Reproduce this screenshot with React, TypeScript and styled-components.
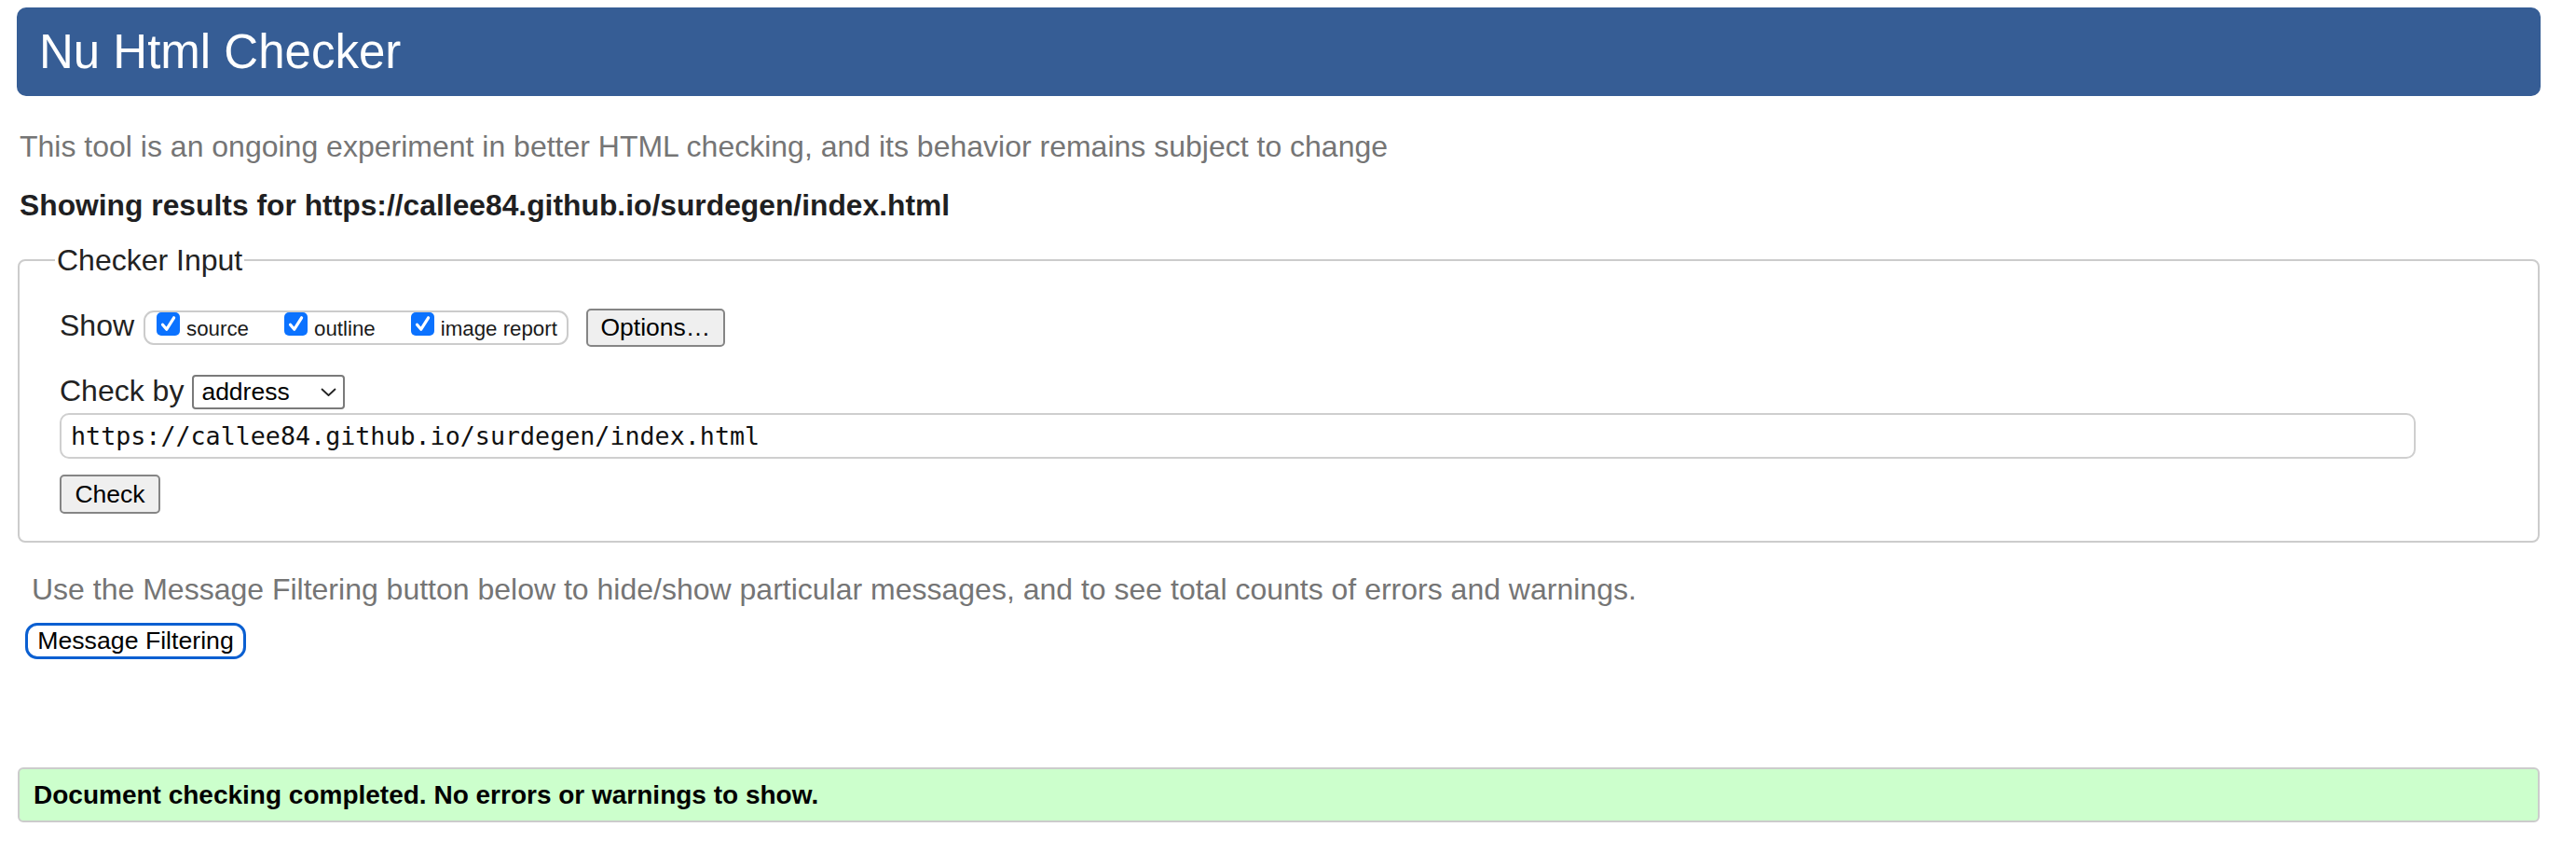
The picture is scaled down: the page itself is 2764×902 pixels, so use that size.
import React from 'react';
import styled, { createGlobalStyle } from 'styled-components';

const GlobalStyle = createGlobalStyle`
  html, body {
    margin: 0;
    padding: 0;
    background: #fff;
  }
  body {
    font-family: "Liberation Sans", Arial, sans-serif;
    color: #222;
  }
`;

const Page = styled.div`
  padding: 8px 38px 0 18px;
  display: flex;
  flex-direction: column;
`;

const Header = styled.h1`
  margin: 0;
  height: 95px;
  box-sizing: border-box;
  display: flex;
  align-items: center;
  padding-left: 24px;
  background: #365d95;
  border-radius: 10px;
  color: #fff;
  font-size: 51px;
  font-weight: normal;
`;

const Text = styled.p<{ $top: number; $bold?: boolean; $indent?: number }>`
  margin: ${p => p.$top}px 0 0 ${p => p.$indent ?? 3}px;
  font-size: ${p => (p.$bold ? 31.8 : 32)}px;
  line-height: 36px;
  font-weight: ${p => (p.$bold ? 'bold' : 'normal')};
  color: ${p => (p.$bold ? '#1f1f22' : '#757575')};
`;

const Fieldset = styled.fieldset`
  margin: 23px 1px 0;
  padding: 0 131px 29px 43px;
  border: 2px solid #ccc;
  border-radius: 8px;
  min-width: 0;
`;

const Legend = styled.legend`
  margin-left: -5px;
  padding: 0 2px;
  font-size: 32px;
  line-height: 36px;
  color: #222;
`;

const Row = styled.div<{ $top: number }>`
  display: flex;
  align-items: flex-start;
  margin-top: ${p => p.$top}px;
`;

const Label = styled.span<{ $gap: number }>`
  font-size: 32px;
  line-height: 36px;
  color: #222;
  margin-right: ${p => p.$gap}px;
`;

const CheckGroup = styled.div`
  display: flex;
  align-items: flex-start;
  gap: 38px;
  height: 37px;
  box-sizing: border-box;
  margin-top: 2px;
  padding: 0 10px 0 12px;
  border: 2px solid #ccc;
  border-radius: 11px;
`;

const CheckItem = styled.label`
  font-size: 22.3px;
  line-height: 22px;
  color: #1a1a1a;
  white-space: nowrap;
`;

const Box = styled.span`
  display: inline-block;
  width: 25px;
  height: 25px;
  margin-right: 7px;
  border-radius: 5px;
  background: #0b72ff;
  vertical-align: baseline;
  svg {
    display: block;
  }
`;

const Button = styled.button<{ $w: number; $h: number; $ml?: number }>`
  width: ${p => p.$w}px;
  height: ${p => p.$h}px;
  margin-left: ${p => p.$ml ?? 0}px;
  padding: 0;
  box-sizing: border-box;
  background: #efefef;
  border: 2px solid #858585;
  border-radius: 5px;
  font-family: "Liberation Sans", Arial, sans-serif;
  font-size: 26.5px;
  color: #000;
`;

const Select = styled.div`
  display: flex;
  align-items: center;
  justify-content: space-between;
  width: 164px;
  height: 37px;
  box-sizing: border-box;
  margin-top: 1px;
  padding: 0 7px 0 8px;
  border: 2px solid #7a7a7a;
  border-radius: 4px;
  font-size: 26.5px;
  color: #000;
`;

const UrlInput = styled.input`
  display: block;
  width: 100%;
  height: 49px;
  box-sizing: border-box;
  margin-top: 4px;
  padding: 0 10px;
  border: 2px solid #cfcfcf;
  border-radius: 10px;
  font-family: "DejaVu Sans Mono", "Liberation Mono", monospace;
  font-size: 26.7px;
  color: #111;
  outline: none;
`;

const FocusButton = styled.button`
  align-self: flex-start;
  width: 237px;
  height: 39px;
  box-sizing: border-box;
  margin: 18px 0 0 9px;
  padding: 0;
  background: #fff;
  border: 3.5px solid #0a5fd1;
  border-radius: 13px;
  font-family: "Liberation Sans", Arial, sans-serif;
  font-size: 26.7px;
  color: #000;
`;

const Notice = styled.div`
  margin: 116px 1px 0;
  height: 59px;
  box-sizing: border-box;
  display: flex;
  align-items: center;
  padding-left: 15px;
  background: #ccffcc;
  border: 2px solid #cccccc;
  border-radius: 6px;
  font-size: 28px;
  font-weight: bold;
  color: #000;
`;

const Check = () => (
  <svg width="25" height="25" viewBox="0 0 25 25">
    <path d="M6.5 13.2 L10.8 18.2 L18.6 5.8" fill="none" stroke="#fff" strokeWidth="3.2" strokeLinecap="round" strokeLinejoin="round" />
  </svg>
);

const Chevron = () => (
  <svg width="17" height="10" viewBox="0 0 17 10">
    <path d="M1.5 1.5 L8.5 8 L15.5 1.5" fill="none" stroke="#222" strokeWidth="1.8" strokeLinecap="round" strokeLinejoin="round" />
  </svg>
);

const options = ['source', 'outline', 'image report'];

export default function App() {
  return (
    <>
      <GlobalStyle />
      <Page>
        <Header>Nu Html Checker</Header>
        <Text $top={36}>
          This tool is an ongoing experiment in better HTML checking, and its behavior remains subject to change
        </Text>
        <Text $top={27} $bold>
          Showing results for https://callee84.github.io/surdegen/index.html
        </Text>
        <Fieldset>
          <Legend>Checker Input</Legend>
          <Row $top={34}>
            <Label $gap={10}>Show</Label>
            <CheckGroup>
              {options.map(o => (
                <CheckItem key={o}>
                  <Box>
                    <Check />
                  </Box>
                  {o}
                </CheckItem>
              ))}
            </CheckGroup>
            <Button $w={149} $h={41} $ml={19}>
              Options…
            </Button>
          </Row>
          <Row $top={29}>
            <Label $gap={9}>Check by</Label>
            <Select>
              <span>address</span>
              <Chevron />
            </Select>
          </Row>
          <UrlInput readOnly value="https://callee84.github.io/surdegen/index.html" />
          <Row $top={17}>
            <Button $w={108} $h={42}>
              Check
            </Button>
          </Row>
        </Fieldset>
        <Text $top={32} $indent={16}>
          Use the Message Filtering button below to hide/show particular messages, and to see total counts of errors and warnings.
        </Text>
        <FocusButton>Message Filtering</FocusButton>
        <Notice>Document checking completed. No errors or warnings to show.</Notice>
      </Page>
    </>
  );
}
